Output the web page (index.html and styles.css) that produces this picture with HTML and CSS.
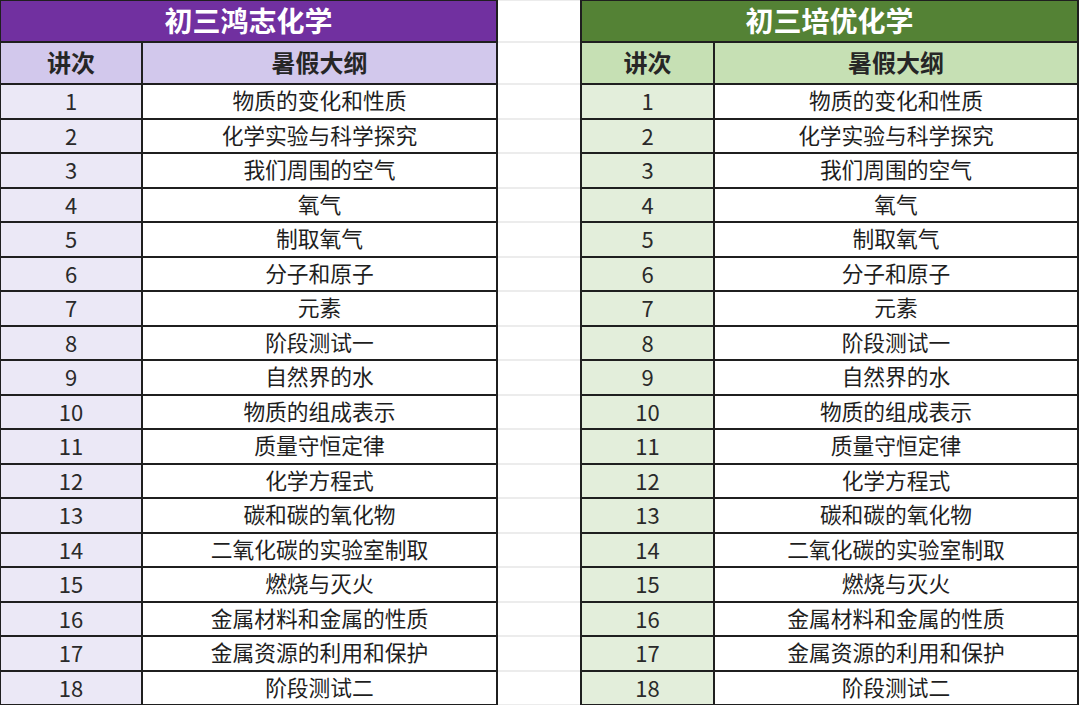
FILE: index.html
```html
<!DOCTYPE html>
<html lang="zh">
<head>
<meta charset="utf-8">
<title>初三化学暑假大纲</title>
<link rel="stylesheet" href="styles.css">
</head>
<body>
<div class="page">
  <div class="sheet sheet-purple">
    <div class="cell title">初三鸿志化学</div>
    <div class="cell head">讲次</div>
    <div class="cell head">暑假大纲</div>
    <div class="cell num">1</div><div class="cell topic">物质的变化和性质</div>
    <div class="cell num">2</div><div class="cell topic">化学实验与科学探究</div>
    <div class="cell num">3</div><div class="cell topic">我们周围的空气</div>
    <div class="cell num">4</div><div class="cell topic">氧气</div>
    <div class="cell num">5</div><div class="cell topic">制取氧气</div>
    <div class="cell num">6</div><div class="cell topic">分子和原子</div>
    <div class="cell num">7</div><div class="cell topic">元素</div>
    <div class="cell num">8</div><div class="cell topic">阶段测试一</div>
    <div class="cell num">9</div><div class="cell topic">自然界的水</div>
    <div class="cell num">10</div><div class="cell topic">物质的组成表示</div>
    <div class="cell num">11</div><div class="cell topic">质量守恒定律</div>
    <div class="cell num">12</div><div class="cell topic">化学方程式</div>
    <div class="cell num">13</div><div class="cell topic">碳和碳的氧化物</div>
    <div class="cell num">14</div><div class="cell topic">二氧化碳的实验室制取</div>
    <div class="cell num">15</div><div class="cell topic">燃烧与灭火</div>
    <div class="cell num">16</div><div class="cell topic">金属材料和金属的性质</div>
    <div class="cell num">17</div><div class="cell topic">金属资源的利用和保护</div>
    <div class="cell num">18</div><div class="cell topic">阶段测试二</div>
  </div>

  <div class="spacer">
    <div class="blank"></div><div class="blank"></div><div class="blank"></div>
    <div class="blank"></div><div class="blank"></div><div class="blank"></div>
    <div class="blank"></div><div class="blank"></div><div class="blank"></div>
    <div class="blank"></div><div class="blank"></div><div class="blank"></div>
    <div class="blank"></div><div class="blank"></div><div class="blank"></div>
    <div class="blank"></div><div class="blank"></div><div class="blank"></div>
    <div class="blank"></div><div class="blank"></div>
  </div>

  <div class="sheet sheet-green">
    <div class="cell title">初三培优化学</div>
    <div class="cell head">讲次</div>
    <div class="cell head">暑假大纲</div>
    <div class="cell num">1</div><div class="cell topic">物质的变化和性质</div>
    <div class="cell num">2</div><div class="cell topic">化学实验与科学探究</div>
    <div class="cell num">3</div><div class="cell topic">我们周围的空气</div>
    <div class="cell num">4</div><div class="cell topic">氧气</div>
    <div class="cell num">5</div><div class="cell topic">制取氧气</div>
    <div class="cell num">6</div><div class="cell topic">分子和原子</div>
    <div class="cell num">7</div><div class="cell topic">元素</div>
    <div class="cell num">8</div><div class="cell topic">阶段测试一</div>
    <div class="cell num">9</div><div class="cell topic">自然界的水</div>
    <div class="cell num">10</div><div class="cell topic">物质的组成表示</div>
    <div class="cell num">11</div><div class="cell topic">质量守恒定律</div>
    <div class="cell num">12</div><div class="cell topic">化学方程式</div>
    <div class="cell num">13</div><div class="cell topic">碳和碳的氧化物</div>
    <div class="cell num">14</div><div class="cell topic">二氧化碳的实验室制取</div>
    <div class="cell num">15</div><div class="cell topic">燃烧与灭火</div>
    <div class="cell num">16</div><div class="cell topic">金属材料和金属的性质</div>
    <div class="cell num">17</div><div class="cell topic">金属资源的利用和保护</div>
    <div class="cell num">18</div><div class="cell topic">阶段测试二</div>
  </div>
  <div class="edge"></div>
</div>
</body>
</html>
```

FILE: styles.css
```css
html, body {
  margin: 0;
  padding: 0;
  background: #ffffff;
}

body {
  font-family: "Noto Sans CJK SC", "Noto Sans", sans-serif;
  color: #222222;
}

.page {
  display: flex;
  width: 1080px;
  height: 705px;
  overflow: hidden;
}

.sheet {
  display: grid;
  grid-template-rows: 40px 40px repeat(18, 32.5px);
  gap: 2px;
  background: #1f1f1f;
  padding: 1px 2px 1px 1px;
  flex: none;
}

.sheet-purple {
  width: 498px;
  box-sizing: border-box;
  grid-template-columns: 140px 353px;
}

.sheet-green {
  width: 499px;
  box-sizing: border-box;
  padding-left: 2px;
  grid-template-columns: 131px 362px;
}

.spacer {
  flex: 1;
  display: grid;
  grid-template-rows: 40px 40px repeat(18, 32.5px);
  row-gap: 2px;
  padding: 1px 0;
  background: #ececec;
}

.blank {
  background: #ffffff;
}

.edge {
  width: 1px;
  flex: none;
}

.cell {
  display: flex;
  align-items: center;
  justify-content: center;
  background: #ffffff;
  font-size: 21px;
  line-height: 1;
  white-space: nowrap;
  padding-bottom: 2px;
}

.title {
  grid-column: 1 / span 2;
  font-size: 28px;
  font-weight: 700;
  color: #ffffff;
}

.head {
  font-size: 24px;
  font-weight: 700;
  color: #262626;
}

.num {
  font-size: 22px;
  color: #2a2a2a;
}

.topic {
  font-size: 21.75px;
  color: #1e1e1e;
}

.sheet-purple .title { background: #7130a0; }
.sheet-purple .head { background: #d2c8ec; }
.sheet-purple .num { background: #ebe8f6; }

.sheet-green .title { background: #548235; }
.sheet-green .head { background: #c6e0b4; }
.sheet-green .num { background: #e3eedb; }
```
